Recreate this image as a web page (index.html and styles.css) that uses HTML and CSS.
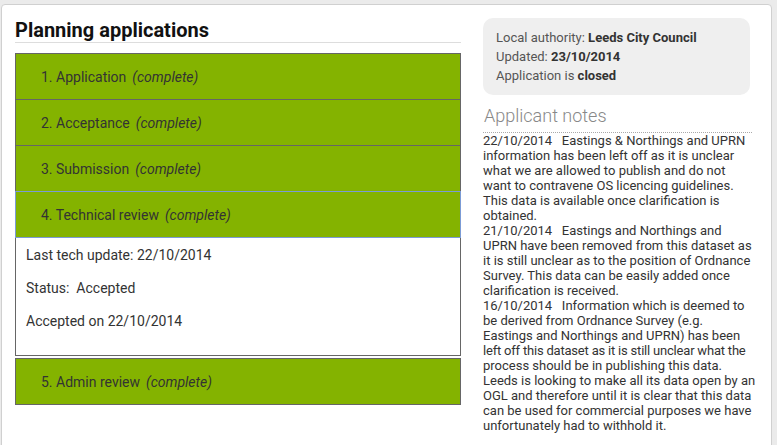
FILE: index.html
```html
<!DOCTYPE html>
<html lang="en">
<head>
<meta charset="utf-8">
<title>Planning applications</title>
<link rel="stylesheet" href="styles.css">
</head>
<body>
<div class="panel">
  <div class="main">
    <h1 class="title">Planning applications</h1>
    <div class="accordion">
      <div class="step"><span class="step-name">1. Application</span><em class="state">(complete)</em></div>
      <div class="step"><span class="step-name">2. Acceptance</span><em class="state">(complete)</em></div>
      <div class="step"><span class="step-name">3. Submission</span><em class="state">(complete)</em></div>
      <div class="step step-open"><span class="step-name">4. Technical review</span><em class="state">(complete)</em></div>
      <div class="step-body">
        <p>Last tech update: 22/10/2014</p>
        <p>Status:&nbsp; Accepted</p>
        <p>Accepted on 22/10/2014</p>
      </div>
      <div class="step step-sep"><span class="step-name">5. Admin review</span><em class="state">(complete)</em></div>
    </div>
  </div>
  <aside class="side">
    <div class="info">
      <div>Local authority: <b>Leeds City Council</b></div>
      <div>Updated: <b>23/10/2014</b></div>
      <div>Application is <b>closed</b></div>
    </div>
    <h2 class="notes-title">Applicant notes</h2>
    <div class="notes">
      <div>22/10/2014&nbsp;&nbsp; Eastings &amp; Northings and UPRN information has been left off as it is unclear what we are allowed to publish and do not want to contravene OS licencing guidelines. This data is available once clarification is obtained.</div>
      <div>21/10/2014&nbsp;&nbsp; Eastings and Northings and UPRN have been removed from this dataset as it is still unclear as to the position of Ordnance Survey. This data can be easily added once clarification is received.</div>
      <div>16/10/2014&nbsp;&nbsp; Information which is deemed to be derived from Ordnance Survey (e.g.<br>Eastings and Northings and UPRN) has been <span class="tight">left off this dataset as it is still unclear what the</span> process should be in publishing this data. Leeds is looking to make all its data open by an OGL and therefore until it is clear that this data can be used for commercial purposes we have unfortunately had to withhold it.</div>
    </div>
  </aside>
</div>
</body>
</html>
```

FILE: styles.css
```css
html, body {
  margin: 0;
  padding: 0;
}
body {
  background: #ebebeb;
  font-family: Roboto, "Liberation Sans", sans-serif;
  color: #333;
  overflow: hidden;
}
.panel {
  margin: 4px 5px 0 1px;
  height: 460px;
  background: #fff;
  border: 1px solid #d0d0d0;
  border-radius: 4px;
  box-sizing: border-box;
  padding: 13px 20px 0 13px;
  display: grid;
  grid-template-columns: 446px 269px;
  column-gap: 22px;
  align-items: start;
}
.title {
  margin: 0;
  padding: 0;
  font-size: 20px;
  line-height: 24px;
  font-weight: 700;
  color: #111;
  border-bottom: 1px solid #ddd;
}
.accordion {
  margin-top: 10px;
}
.step {
  height: 47px;
  box-sizing: border-box;
  background: #84b300;
  border: 1px solid #666;
  margin-top: -1px;
  display: flex;
  align-items: center;
  gap: 6px;
  padding-left: 25px;
  font-size: 14px;
  color: #333;
}
.step:first-child {
  margin-top: 0;
}
.step-open {
  border-color: #7b9bd6;
  position: relative;
}
.state {
  font-style: italic;
}
.step-body {
  border: 1px solid #666;
  border-top: none;
  padding: 7px 10px 11px;
  font-size: 14px;
  color: #333;
}
.step-body p {
  margin: 0 0 13px;
  line-height: 20px;
}
.step-sep {
  margin-top: 2px;
}
.info {
  background: #efefef;
  border-radius: 10px;
  padding: 10px 13px;
  margin-right: 2px;
  font-size: 13px;
  line-height: 19px;
  color: #555;
}
.info b {
  color: #333;
}
.notes-title {
  margin: 9px 0 0;
  padding: 0 0 4px 1px;
  font-size: 18px;
  line-height: 24px;
  font-weight: 300;
  color: #888;
  border-bottom: 1px dotted #aaa;
}
.notes {
  font-size: 13px;
  line-height: 15px;
  color: #333;
  margin-right: -4px;
}
.tight {
  letter-spacing: -0.2px;
}
```
